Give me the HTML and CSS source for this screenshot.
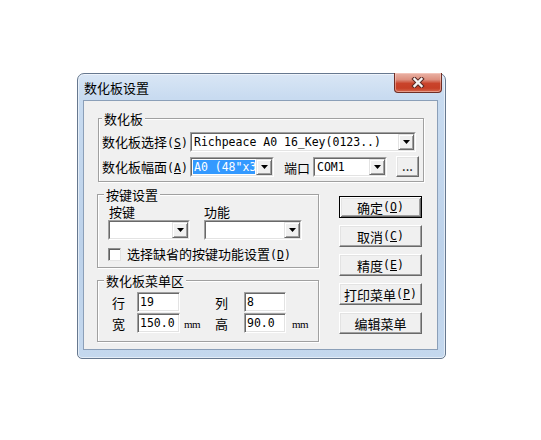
FILE: index.html
```html
<!DOCTYPE html>
<html lang="zh-CN">
<head>
<meta charset="utf-8">
<title>数化板设置</title>
<link rel="stylesheet" href="styles.css">
</head>
<body>
<div class="window">
  <div class="titlebar">
    <span class="title">数化板设置</span>
    <button class="close" aria-label="关闭">
      <svg width="14" height="11" viewBox="0 0 14 11"><path d="M3.5 2 L10.5 9 M10.5 2 L3.5 9" stroke="#5a2a24" stroke-width="4.4" stroke-linecap="square" fill="none"/><path d="M3.5 2 L10.5 9 M10.5 2 L3.5 9" stroke="#f4f4f4" stroke-width="2.4" stroke-linecap="square" fill="none"/></svg>
    </button>
  </div>
  <div class="client">
    <fieldset class="group g1">
      <legend>数化板</legend>
      <div class="g1-body">
        <div class="row">
          <span class="lbl lbl-wide">数化板选择<span class="k">(<u>S</u>)</span></span>
          <div class="combo c-board"><div class="combo-in"><span class="val">Richpeace A0 16_Key(0123..)</span><span class="drop"><svg width="7" height="4" viewBox="0 0 7 4"><path d="M0 0h7L3.5 4z"/></svg></span></div></div>
        </div>
        <div class="row row2">
          <span class="lbl lbl-wide">数化板幅面<span class="k">(<u>A</u>)</span></span>
          <div class="combo c-size"><div class="combo-in"><span class="val selected">A0 (48"x3</span><span class="drop"><svg width="7" height="4" viewBox="0 0 7 4"><path d="M0 0h7L3.5 4z"/></svg></span></div></div>
          <span class="lbl lbl-port">端口</span>
          <div class="combo c-port"><div class="combo-in"><span class="val">COM1</span><span class="drop"><svg width="7" height="4" viewBox="0 0 7 4"><path d="M0 0h7L3.5 4z"/></svg></span></div></div>
          <button class="btn dots">...</button>
        </div>
      </div>
    </fieldset>
    <div class="lower">
      <div class="left">
        <fieldset class="group g2">
          <legend>按键设置</legend>
          <div class="g2-body">
            <div class="cols">
              <div class="col col-key">
                <div class="cap">按键</div>
                <div class="combo"><div class="combo-in"><span class="val"></span><span class="drop"><svg width="7" height="4" viewBox="0 0 7 4"><path d="M0 0h7L3.5 4z"/></svg></span></div></div>
              </div>
              <div class="col col-fn">
                <div class="cap">功能</div>
                <div class="combo"><div class="combo-in"><span class="val"></span><span class="drop"><svg width="7" height="4" viewBox="0 0 7 4"><path d="M0 0h7L3.5 4z"/></svg></span></div></div>
              </div>
            </div>
            <div class="check"><span class="box"></span><span>选择缺省的按键功能设置<span class="k">(<u>D</u>)</span></span></div>
          </div>
        </fieldset>
        <fieldset class="group g3">
          <legend>数化板菜单区</legend>
          <div class="g3-body">
            <span class="glbl">行</span><span class="edit">19</span><span class="unit"></span>
            <span class="glbl">列</span><span class="edit">8</span><span class="unit"></span>
            <span class="glbl">宽</span><span class="edit">150.0</span><span class="unit">mm</span>
            <span class="glbl">高</span><span class="edit">90.0</span><span class="unit">mm</span>
          </div>
        </fieldset>
      </div>
      <div class="buttons">
        <button class="btn push default">确定<span class="k">(<u>O</u>)</span></button>
        <button class="btn push">取消<span class="k">(<u>C</u>)</span></button>
        <button class="btn push">精度<span class="k">(<u>E</u>)</span></button>
        <button class="btn push">打印菜单<span class="k">(<u>P</u>)</span></button>
        <button class="btn push">编辑菜单</button>
      </div>
    </div>
  </div>
</div>
</body>
</html>
```

FILE: styles.css
```css
* { box-sizing: border-box; }
html, body { margin: 0; padding: 0; background: #fff; }
body {
  font: 13px/13px "Noto Sans CJK SC", "Noto Sans CJK JP", sans-serif;
  color: #000;
}
.k, .val, .edit, .dots {
  font-family: "DejaVu Sans Mono", "Liberation Mono", monospace;
  font-size: 11.5px;
}
u { text-decoration: underline; text-underline-offset: 1px; }

.window {
  margin: 73px 0 0 77px;
  width: 369px;
  height: 286px;
  border: 1px solid #66788f;
  border-radius: 7px 7px 5px 5px;
  background: linear-gradient(#d9e6f5 0, #c8dbf0 24px, #bdd2ea 60%, #c4d8ee 100%);
  box-shadow: inset 0 0 0 1px rgba(255,255,255,0.55);
  padding: 0 7px 8px 5px;
  display: flex;
  flex-direction: column;
}
.titlebar {
  height: 26px;
  display: flex;
  align-items: center;
}
.title {
  flex: 1;
  padding-left: 1px;
  padding-top: 1px;
  white-space: nowrap;
}
.close {
  align-self: flex-start;
  margin: -1px -4px 0 0;
  width: 48px;
  height: 20px;
  padding: 0;
  border: 1px solid #6f2e25;
  border-top: none;
  border-radius: 0 0 4px 4px;
  background: linear-gradient(#eab3a6 0, #dd8f7e 35%, #c9432b 55%, #c63f26 80%, #d66a50 100%);
  box-shadow: inset 0 0 0 1px rgba(255,220,210,0.45);
  display: flex;
  align-items: center;
  justify-content: center;
}
.close svg { display: block; }

.client {
  flex: 1;
  border: 1px solid #8b9fb8;
  background: #f0f0f0;
  padding: 11px 0 0 13px;
}

.group {
  margin: 0;
  padding: 0;
  min-inline-size: 0;
  border: 1px solid #a0a0a0;
  box-shadow: 1px 1px 0 #fff, inset 1px 1px 0 #fff;
}
.group legend {
  padding: 0 2px;
  line-height: 13px;
  height: 13px;
  background: #f0f0f0;
}
.g1 { margin-left: 1px; width: 326px; }
.g1 legend { margin-left: 3px; }
.g1-body { padding: 7px 3px 4px 3px; display: flex; flex-direction: column; gap: 5px; }

.row { display: flex; align-items: center; height: 20px; }
.lbl { white-space: nowrap; }
.lbl-wide { width: 88px; }
.lbl-port { margin-left: 10px; width: 29px; }

.combo {
  display: flex;
  height: 20px;
  border: 1px solid;
  border-color: #a0a0a0 #fff #fff #a0a0a0;
}
.combo-in {
  flex: 1;
  display: flex;
  min-width: 0;
  border: 1px solid;
  border-color: #696969 #e3e3e3 #e3e3e3 #696969;
  background: #fff;
}
.val {
  flex: 1;
  min-width: 0;
  overflow: hidden;
  white-space: nowrap;
  line-height: 16px;
  padding-left: 2px;
}
.val.selected {
  margin: 1px;
  padding-left: 1px;
  line-height: 14px;
  background: #3399ff;
  color: #fff;
}
.drop {
  flex: none;
  width: 16px;
  height: 16px;
  background: #f0f0f0;
  border: 1px solid;
  border-color: #e3e3e3 #696969 #696969 #e3e3e3;
  box-shadow: inset 1px 1px 0 #fff, inset -1px -1px 0 #a0a0a0;
  display: flex;
  align-items: center;
  justify-content: center;
}
.drop svg { display: block; }
.c-board { width: 226px; }
.c-size { width: 84px; }
.c-port { width: 74px; }

.btn {
  padding: 0;
  font: inherit;
  color: #000;
  background: #f0f0f0;
  border: 1px solid;
  border-color: #fff #696969 #696969 #fff;
  box-shadow: inset -1px -1px 0 #a0a0a0, inset 1px 1px 0 #e3e3e3;
  display: flex;
  align-items: center;
  justify-content: center;
}
.dots {
  margin-left: 9px;
  margin-top: -1px;
  width: 23px;
  height: 21px;
  line-height: 14px;
  padding-bottom: 2px;
}

.lower { display: flex; margin-top: 6px; }
.left { width: 222px; display: flex; flex-direction: column; }
.g2 legend, .g3 legend { margin-left: 6px; }
.g2-body { padding: 4px 0 6px 10px; }
.cols { display: flex; gap: 14px; }
.col-key { width: 82px; }
.col-fn { width: 98px; }
.col-key .cap { padding-left: 1px; }
.cap { height: 13px; margin-bottom: 2px; }
.check { display: flex; align-items: center; gap: 6px; margin-top: 8px; height: 13px; }
.box {
  width: 13px;
  height: 13px;
  background: #fff;
  border: 1px solid;
  border-color: #8e8f8f #e3e3e3 #e3e3e3 #8e8f8f;
  box-shadow: inset 1px 1px 0 #5f5f5f;
}

.g3 { margin-top: 6px; }
.g3-body {
  padding: 5px 0 8px 14px;
  display: grid;
  grid-template-columns: 25px 43px 35px 29px 42px 30px;
  grid-auto-rows: 20px;
  row-gap: 1px;
  align-items: center;
}
.edit {
  height: 20px;
  background: #fff;
  border: 1px solid;
  border-color: #a0a0a0 #fff #fff #a0a0a0;
  box-shadow: inset 1px 1px 0 #696969, inset -1px -1px 0 #e3e3e3;
  padding-left: 2px;
  line-height: 18px;
  white-space: nowrap;
}
.unit {
  font-family: "Liberation Serif", serif;
  font-size: 11px;
  letter-spacing: -0.5px;
  padding-left: 4px;
  padding-top: 3px;
}
.g3-body .unit:last-child { padding-left: 6px; }

.buttons {
  margin-left: 20px;
  padding-top: 8px;
  width: 83px;
  display: flex;
  flex-direction: column;
  gap: 7px;
}
.push { height: 22px; width: 83px; white-space: nowrap; }
.push.default {
  border-color: #000;
  box-shadow: inset 1px 1px 0 #fff, inset -1px -1px 0 #696969, inset 2px 2px 0 #e3e3e3, inset -2px -2px 0 #a0a0a0;
}
```
